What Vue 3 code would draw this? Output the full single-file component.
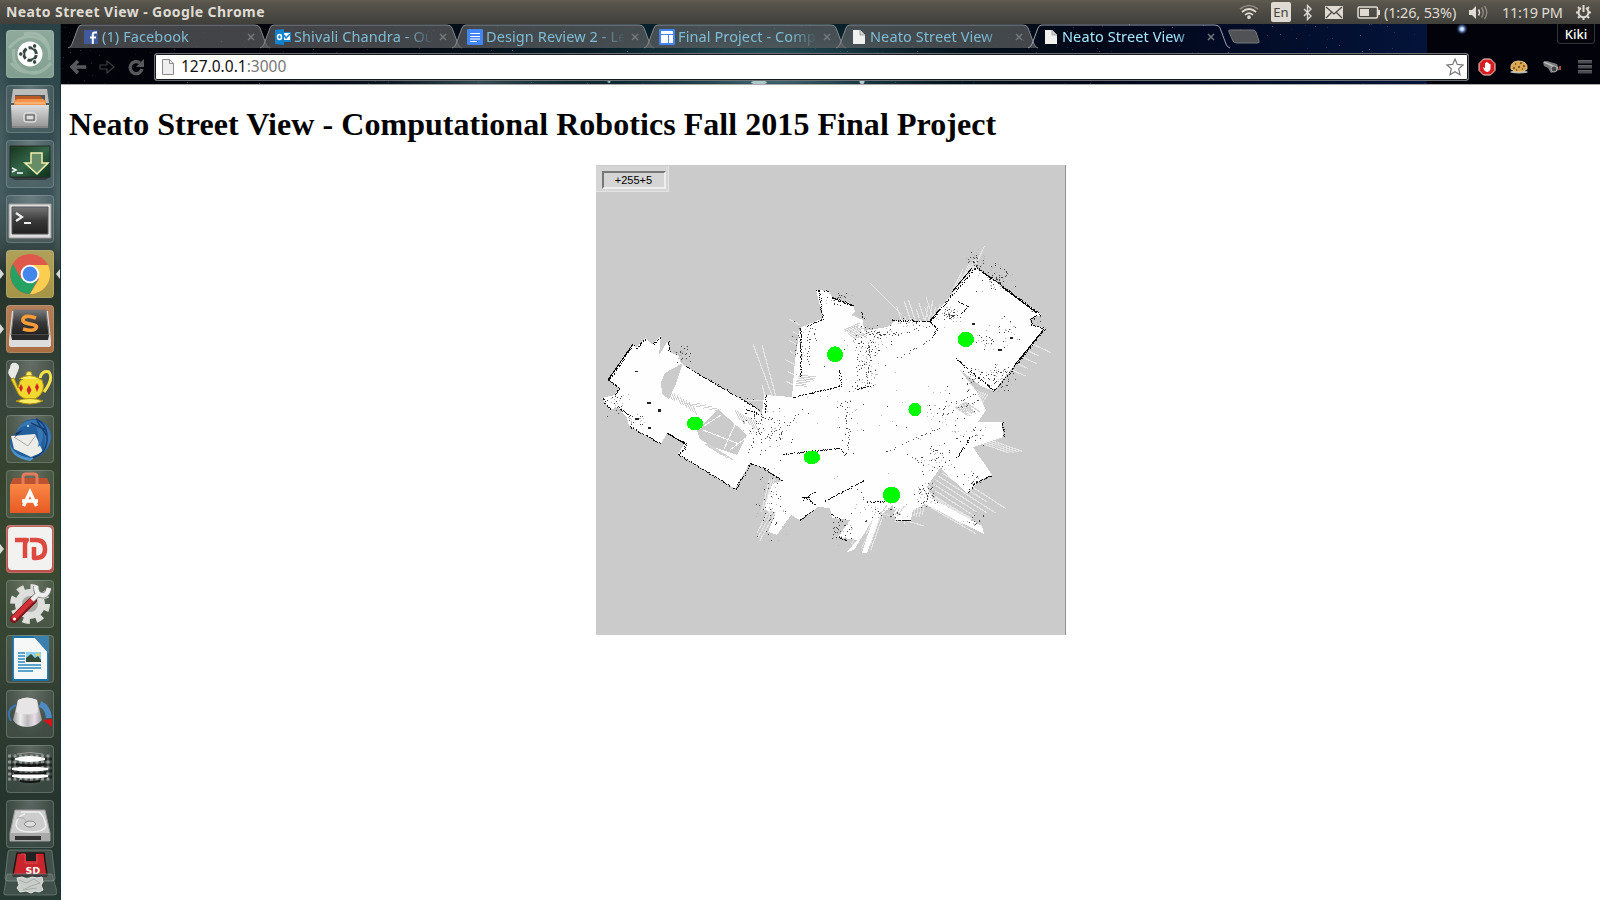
<script setup>
const tabs = [
  { title: '(1) Facebook', icon: 'fb' },
  { title: 'Shivali Chandra - Ou', icon: 'outlook' },
  { title: 'Design Review 2 - Le', icon: 'doc' },
  { title: 'Final Project - Comp', icon: 'site' },
  { title: 'Neato Street View', icon: 'page' },
  { title: 'Neato Street View', icon: 'page', active: true },
]

const apps = [
  { name: 'dash', bg: '#7d9c8c' }, { name: 'files' }, { name: 'download' }, { name: 'terminal' },
  { name: 'chrome', bg: '#a3913f', left: true, right: true }, { name: 'sublime', bg: '#a8693c', left: true },
  { name: 'teapot' }, { name: 'mail' }, { name: 'store' }, { name: 'todo', bg: '#b94a43', left: true },
  { name: 'settings' }, { name: 'writer' }, { name: 'knob' }, { name: 'stripes' }, { name: 'disk' },
]

let seed = 77
const rnd = () => {
  seed = (seed * 16807) % 2147483647
  return seed / 2147483647
}

const stars = Array.from({ length: 420 }, () => ({
  x: Math.floor(rnd() * 1366), y: Math.floor(rnd() * 60), o: rnd() * 0.5 + 0.08, c: rnd() > 0.5 ? '#6fa3b5' : '#3a5f9c',
}))

const rough = (points, amount, step) => {
  let d = ''
  for (let i = 0; i < points.length - 1; i++) {
    const [x1, y1] = points[i]
    const [x2, y2] = points[i + 1]
    const n = Math.max(1, Math.round(Math.hypot(x2 - x1, y2 - y1) / step))
    for (let k = 0; k < n; k++) {
      if (rnd() < 0.12) continue
      const x = Math.round(x1 + ((x2 - x1) * k) / n + (rnd() - 0.5) * amount)
      const y = Math.round(y1 + ((y2 - y1) * k) / n + (rnd() - 0.5) * amount)
      d += `M${x} ${y}h${rnd() > 0.6 ? 2 : 1}v1h-1z`
    }
  }
  return d
}

const firm = [
  [[608, 380], [633, 344]], [[636, 348], [645, 338]], [[652, 345], [661, 336]], [[668, 341], [669, 352]],
  [[608, 380], [619, 388], [615, 395]], [[602, 398], [610, 410]], [[618, 407], [630, 416]],
  [[629, 426], [661, 444]], [[667, 433], [685, 443], [684, 449], [678, 454], [735, 489], [750, 463], [764, 468], [783, 481]],
  [[685, 366], [760, 410]], [[746, 409], [761, 415]], [[800, 328], [800, 377]], [[807, 326], [823, 318]],
  [[818, 290], [822, 318]], [[815, 290], [829, 291]], [[832, 297], [853, 305]], [[832, 298], [853, 306]], [[860, 311], [863, 320]],
  [[792, 397], [840, 386], [839, 369]], [[856, 389], [871, 385]],
  [[929, 322], [942, 306], [975, 267]], [[975, 266], [1041, 315]], [[1036, 315], [1030, 319], [1031, 325], [1044, 328]],
  [[1044, 329], [994, 391]], [[955, 358], [994, 391]], [[892, 320], [930, 321], [936, 329], [930, 338]],
  [[782, 454], [839, 448], [848, 456]], [[824, 501], [864, 480]], [[802, 500], [814, 491]], [[804, 497], [815, 505]],
  [[866, 502], [884, 501]], [[967, 492], [975, 482], [991, 475]], [[956, 457], [970, 437]], [[1002, 422], [1003, 437]],
  [[895, 520], [911, 520]], [[838, 537], [848, 541]], [[831, 514], [842, 521]], [[765, 395], [764, 414]],
  [[958, 301], [967, 306], [961, 314]], [[799, 520], [813, 510]],
].map((p) => rough(p, 0.9, 1.05)).join('')

const heavy = 'M929 322l11-13M667 433l18 11M608 380l25-36M952 292l20-24M982 272l10 7M1002 287l35 26M1044 329l-30 37M802 497l8 1'

const faint = [
  [[886, 451], [940, 427]], [[898, 357], [930, 340]], [[779, 421], [780, 436]], [[846, 407], [848, 452]],
  [[780, 432], [803, 408]], [[808, 328], [808, 366]], [[812, 328], [815, 342]], [[856, 389], [858, 349]],
  [[865, 385], [870, 350]], [[955, 403], [977, 392]], [[940, 416], [980, 398]], [[908, 454], [927, 467]],
  [[858, 490], [866, 501]], [[931, 446], [943, 456]], [[760, 441], [780, 427]], [[764, 450], [757, 454]],
  [[762, 415], [748, 454]], [[865, 332], [895, 334], [930, 326]],
].map((p) => rough(p, 2.4, 2.5)).join('')

const clusters = [
  [872, 340, 30, 18, 120], [867, 366, 11, 26, 60], [995, 277, 22, 16, 110], [975, 262, 13, 13, 45],
  [682, 353, 10, 10, 45], [620, 406, 16, 16, 35], [635, 421, 12, 8, 30], [951, 314, 11, 9, 60], [1000, 377, 17, 17, 80],
  [927, 494, 14, 15, 75], [770, 505, 18, 38, 80], [774, 425, 20, 25, 45], [845, 412, 13, 35, 28], [946, 410, 34, 30, 40],
  [935, 460, 26, 22, 55], [975, 480, 14, 12, 25], [843, 530, 15, 15, 50], [800, 340, 9, 22, 40], [839, 298, 15, 8, 30],
  [1004, 330, 17, 18, 30], [985, 340, 13, 11, 26], [880, 512, 30, 12, 50], [753, 420, 13, 24, 40], [975, 379, 16, 15, 45],
  [971, 435, 20, 15, 30], [910, 321, 28, 6, 40], [1036, 317, 6, 10, 12], [974, 520, 12, 10, 25], [860, 400, 100, 90, 45],
].map(([cx, cy, rx, ry, n]) => {
  let dark = ''
  let pale = ''
  for (let i = 0; i < n; i++) {
    const x = Math.round(cx + (rnd() + rnd() - 1) * rx)
    const y = Math.round(cy + (rnd() + rnd() - 1) * ry)
    if (rnd() > 0.55) dark += `M${x} ${y}h1v1h-1z`
    else pale += `M${x} ${y}h${rnd() > 0.7 ? 2 : 1}v1h-1z`
  }
  return { dark, pale }
})
const darkDots = clusters.map((c) => c.dark).join('')
const paleDots = clusters.map((c) => c.pale).join('')

const fan = (x, y, dx, dy, sx, sy, n, jitter) => {
  let d = ''
  for (let i = 0; i < n; i++) {
    const t = i / (n - 1)
    const a = x + sx * t
    const b = y + sy * t
    const l = 1 - rnd() * jitter
    d += `M${a.toFixed(1)} ${b.toFixed(1)}l${(dx * l).toFixed(1)} ${(dy * l).toFixed(1)}`
  }
  return d
}
const rays =
  fan(920, 492, 62, 40, 26, -22, 8, 0.3) + fan(918, 500, 62, 36, 10, -7, 8, 0.3) + fan(770, 478, -9, 35, 12, 4, 7, 0.4) +
  fan(775, 500, -22, 40, 5, 4, 3, 0.2) + fan(868, 512, -20, 40, 13, -3, 6, 0.4) + fan(878, 516, -13, 36, 5, 0, 3, 0.2) +
  fan(975, 441, 40, 14, 9, -3, 4, 0.3) + fan(902, 322, -8, -24, 32, -1, 8, 0.8) + fan(925, 322, 4, -21, 12, -3, 4, 0.5) +
  fan(800, 325, -15, -8, -3, 62, 7, 0.8) + fan(795, 395, 2, -40, 8, 0, 5, 0.6) + fan(952, 292, 13, -27, 20, -20, 7, 0.5) +
  fan(1012, 370, 20, 9, 20, -26, 5, 0.5) + fan(965, 386, -8, 12, 23, 8, 12, 0.5) + fan(898, 510, -3, 18, 26, -4, 10, 0.6) +
  'M753 344l20 54M762 345l14 52M870 283l32 32M874 511l50 15M746 401l20-1M762 385l4 15'
const greyRays =
  fan(668, 390, 5, 11, 24, 14, 9, 0.5) + fan(684, 404, 10, -2, 31, 7, 6, 0.4) + fan(844, 330, 18, -8, 10, 9, 9, 0.5) +
  fan(795, 385, 18, 2, 4, -10, 7, 0.6) + fan(705, 444, 23, 15, 5, 1, 4, 0.3) +
  fan(735, 410, 7, 14, 18, 10, 8, 0.5) + fan(955, 407, 18, 12, 10, -5, 9, 0.6) + fan(880, 515, 7, -10, 18, 0, 7, 0.7)

const markers = [
  [835, 354.3, 8, 8], [965.8, 339.3, 8.2, 7.7], [915, 409.5, 6.5, 6.5], [695, 423.5, 8.4, 6.7], [811.8, 457.3, 8.3, 6.8], [891.5, 495, 8.7, 8.2],
]
</script>

<template>
  <div class="desktop">
    <header class="panel">
      <span class="window-title">Neato Street View - Google Chrome</span>
      <div class="indicators">
        <svg class="wifi" width="20" height="16" viewBox="0 0 20 16" fill="none" stroke="#dfdbd2" stroke-width="1.7">
          <path d="M1 5Q10-2 19 5" stroke="#8e8b83" /><path d="M3 8Q10 2 17 8M6 11Q10 7 14 11" /><circle cx="10" cy="13.2" r="1" fill="#dfdbd2" />
        </svg>
        <span class="lang">En</span>
        <svg class="bt" width="10" height="17" viewBox="0 0 10 17" fill="none" stroke="#dfdbd2" stroke-width="1.4"><path d="M1 5l7 7-3.5 3.5V1.5L8 5l-7 7" /></svg>
        <svg class="envelope" width="18" height="13" viewBox="0 0 18 13"><path fill="#dfdbd2" d="M0 0h18v13H0z" /><path d="M1 1l8 7 8-7M1 12l6-6M17 12l-6-6" fill="none" stroke="#4b4943" stroke-width="1.3" /></svg>
        <svg class="battery" width="24" height="13" viewBox="0 0 24 13"><rect x="1" y="1" width="19.5" height="11" rx="1.5" fill="none" stroke="#dfdbd2" stroke-width="1.5" /><path fill="#dfdbd2" d="M3 3h9v7H3zM21 4h2v5h-2z" /></svg>
        <span class="charge">(1:26, 53%)</span>
        <svg class="sound" width="20" height="15" viewBox="0 0 20 15"><path fill="#dfdbd2" d="M0 5h3l4-4v13l-4-4H0z" /><path d="M9.500 4.500q2 3 0 6" fill="none" stroke="#dfdbd2" stroke-width="1.5" /><path d="M12.500 2.500q3.500 5 0 10M15.500 1q4.500 6.500 0 13" fill="none" stroke="#8e8b83" stroke-width="1.4" /></svg>
        <span class="clock">11:19 PM</span>
        <svg width="17" height="17" viewBox="0 0 17 17" fill="none" stroke="#dfdbd2"><path d="M6 4a5 5 0 1 0 5 0" stroke-width="2" /><path d="M8.500 1v7M1 8.500h2M14 8.500h2M3 3l1.500 1.500M14 3l-1.500 1.500M3 14l1.500-1.500M14 14l-1.500-1.500M8.500 14v2" stroke-width="2" /></svg>
      </div>
    </header>

    <div class="workspace">
      <nav class="launcher">
        <div v-for="app in apps" :key="app.name" class="tile" :class="[app.name, { colored: app.bg }]" :style="app.bg ? { backgroundColor: app.bg } : null">
          <i v-if="app.left" class="arrow left"></i><i v-if="app.right" class="arrow right"></i>
          <svg width="48" height="48" viewBox="0 0 48 48">
            <g v-if="app.name === 'dash'">
              <path d="M3 18Q17 1 34 9q12 7 9 21M45 33Q32 49 17 40 5 33 8 19M18 4q19-4 25 14M5 33q9 12 26 9" fill="none" stroke="#bed1c6" stroke-width="3" opacity=".4" />
              <circle cx="24" cy="24" r="12.500" fill="#fff" /><circle cx="24" cy="24" r="6.300" fill="none" stroke="#364740" stroke-width="3" stroke-dasharray="11.200 2" stroke-dashoffset="-1" />
              <g fill="#364740" stroke="#fff"><circle cx="14.800" cy="24" r="2.300" /><circle cx="28.600" cy="16" r="2.300" /><circle cx="28.600" cy="32" r="2.300" /></g>
            </g>
            <g v-else-if="app.name === 'files'">
              <path d="M7 4h34l2 14H5z" fill="#bcbcbb" /><path d="M9 10h30v10H9z" fill="#555" /><path d="M9 11h25l3 3v7H9z" fill="#b75a26" /><path d="M11 14h26l3 2v7H8v-7z" fill="#f39348" /><path d="M9 18h30" stroke="#fbd0a2" />
              <path d="M5 20h38l-1 23H6z" fill="url(#silver)" /><path d="M6 42h36" stroke="#777" /><rect x="18" y="28" width="12" height="9" rx="2" fill="#aaa" stroke="#eee" /><rect x="20" y="30" width="8" height="5" fill="#ddd" stroke="#555" />
            </g>
            <g v-else-if="app.name === 'download'">
              <path d="M4 6h40v31H4z" fill="url(#green)" stroke="#242f29" /><path d="M4 37h40l-5 3H9z" fill="#222" opacity=".6" /><path d="M6 28l4 2-4 2M11 33h6" fill="none" stroke="#fff" stroke-width="1.500" /><path d="M25 13h11v10h6L31 34 19 23h6z" fill="#668d66" stroke="#f4f0af" stroke-width="1.500" />
            </g>
            <g v-else-if="app.name === 'terminal'">
              <path d="M3 9h42v34H3z" fill="#ddd" stroke="#999" /><path d="M6 12h36v27H6z" fill="url(#dark)" stroke="#555" /><path d="M10 18l6 4-6 4M18 28h7" fill="none" stroke="#eee" stroke-width="2.200" />
            </g>
            <g v-else-if="app.name === 'chrome'">
              <circle cx="24" cy="24" r="20" fill="#de594c" /><path d="M15 29L7 14A20 20 0 0 0 24 44l8-15z" fill="#25a261" /><path d="M24 15h18A20 20 0 0 1 24 44l9-15z" fill="#fbce52" /><circle cx="24" cy="24" r="9.300" fill="#fff" /><circle cx="24" cy="24" r="7.400" fill="#4387ed" />
            </g>
            <g v-else-if="app.name === 'sublime'">
              <path d="M6 6h36l3 29v5q0 2-3 2H6q-3 0-3-2v-5z" fill="#ddd" /><path d="M8 5h32l3 25H5z" fill="url(#dark)" stroke="#777" /><path d="M5 30h38l-1 5H6z" fill="#292929" /><path d="M30 13q-11-4-13 1-1 4 7 5t6 4q-2 4-13 1" fill="none" stroke="#f99b38" stroke-width="3.600" />
            </g>
            <g v-else-if="app.name === 'teapot'">
              <path d="M5 18Q0 12 4 8q0-6 6-5 5 2 2 8-3 6-3 8" fill="#e9eae5" /><path d="M34 18q2-8 9-6 5 7-5 20" fill="none" stroke="#f4e348" stroke-width="3" /><path d="M5 19l6 12q2 6 9 8h9q12-7 7-19-13-7-22 1l-2 7-4-10z" fill="#f2d92e" stroke="#b59312" /><circle cx="23" cy="14.500" r="3" fill="#fbed75" stroke="#b59312" /><path d="M13 19q10-7 21 0M10 41q14-5 27 0-13 6-27 0z" fill="#f9ea60" stroke="#b59312" /><path d="M15 24l2 4-2 4-2-4zM23 25l2.500 5-2.500 5-2.500-5zM31 23l2 4-2 5-2-5z" fill="#d32629" />
            </g>
            <g v-else-if="app.name === 'mail'">
              <path d="M12 15Q17 3 29 4q15 2 16 18-1 18-20 22Q4 43 4 25z" fill="#225f9c" /><path d="M5 21l24-2 8 18-12 5-17-8z" fill="#ecece8" /><path d="M8 22l14 9 8-11" fill="none" stroke="#aaa" /><path d="M10 18q7-11 20-7 4 13 2 21 6-4 5-16 5 12-2 23 13-10 9-23Q38 4 26 5q-12 1-16 13z" fill="#3775b5" /><path d="M4 28q2 12 20 15l6-1-6 4Q4 43 4 28z" fill="#4d95cd" /><path d="M30 4q12 5 11 22-1 12-14 17M25 8l15 7M31 6l10 15" fill="none" stroke="#153f73" stroke-width="1.500" /><path d="M10 18l7-3-8 7z" fill="#173253" /><circle cx="22" cy="11" r="1" fill="#fff" />
            </g>
            <g v-else-if="app.name === 'store'">
              <path d="M7 8h34l3 7H4z" fill="#bd5231" /><path d="M17 14V7q0-3 3-3h8q3 0 3 3v7" fill="none" stroke="#e47b5a" stroke-width="3" /><path d="M4 14h40v29H4z" fill="url(#orange)" /><path d="M17.500 36l6.500-14 6.500 14M16 31h16" fill="none" stroke="#fff" stroke-width="3.400" />
            </g>
            <g v-else-if="app.name === 'todo'"><rect x="2" y="2" width="44" height="43" rx="4" fill="#f2f2f1" /><path d="M9 15h12q-2 1-2 5v13M24 15h6q9 0 9 9t-9 9h-2V22" fill="none" stroke="#de493f" stroke-width="4.500" stroke-linejoin="round" /></g>
            <g v-else-if="app.name === 'settings'">
              <circle cx="24" cy="24" r="17" fill="none" stroke="#dededb" stroke-width="6" stroke-dasharray="7 6.350" /><circle cx="24" cy="24" r="15" fill="#dedfdc" /><circle cx="24" cy="24" r="8" fill="#a7aaa2" /><path d="M8 39L27 20" stroke="#7b171b" stroke-width="8" stroke-linecap="round" /><path d="M8 38L27 19" stroke="#d33338" stroke-width="5" stroke-linecap="round" /><path d="M26 20l7-7M30 6q0 8 5 9 6 2 8-7" fill="none" stroke="#777" stroke-width="6" /><path d="M26 20l7-7M30 6q0 8 5 9 6 2 8-7" fill="none" stroke="#eee" stroke-width="4.500" /><circle cx="8.500" cy="39" r="1.500" fill="#fff" />
            </g>
            <g v-else-if="app.name === 'writer'">
              <path d="M7 2h24l11 14v29H7z" fill="#f6f7f7" stroke="#1971a5" stroke-width="1.800" /><path d="M27 1h16v18z" fill="#3b80ad" /><path d="M12 18h7m-7 3h7m-7 3h7m-7 3h7m-7 3h23m-23 3h23m-23 3h15" stroke="#2788bf" stroke-width="1.300" /><path d="M20 17h15v10H20z" fill="#8ed0f1" /><path d="M20 27v-4l5-4 4 4 3-2 3 4v2z" fill="#334b35" /><circle cx="32" cy="19.500" r="1.500" fill="#ffd02c" />
            </g>
            <g v-else-if="app.name === 'knob'">
              <path d="M5 31Q-1 20 10 15" fill="none" stroke="#3975b6" stroke-width="2" /><path d="M34 14q8 3 9 14" fill="none" stroke="#4e8ac3" stroke-width="6" /><path d="M37 30l9-1v8z" fill="#db1118" /><path d="M12 10q9-4 19 0l5 20q-6 7-15 7-10 0-14-7z" fill="url(#knobside)" /><path d="M12 10q9-5 19 0l1 12q-10 5-22 0z" fill="#e8e5e6" />
            </g>
            <g v-else-if="app.name === 'stripes'">
              <path d="M2 11h44M2 17h44M2 23h44M2 29h44M2 34h44" stroke="#929595" stroke-width="3" stroke-dasharray="3 2.500" /><path d="M2 14h44M2 20h44M2 26h44M2 32h44" stroke="#242625" stroke-width="3" stroke-dasharray="3 2.500" stroke-dashoffset="2.700" />
              <path d="M9 13q15-4 30 0v2q-15 4-30 0zM6 23q18-3 36 0v2q-18 3-36 0zM6 30q18-3 36 0v2q-18 3-36 0z" fill="#fff" /><path d="M10 18q14 3 29 0v2q-15 4-29 0zM8 27q16 2 32 0v2q-16 1-32 0zM14 35q10 2 20 0v2q-10 2-20 0z" fill="#141414" /><path d="M11 9q13-3 26 0" fill="none" stroke="#999" />
            </g>
            <g v-else>
              <path d="M9 10h30l5 23v8H4v-8z" fill="#cbcccb" stroke="#999" /><path d="M4 33h40v8H4z" fill="#a8a9a8" /><path d="M9 36h26v4H9z" fill="#333" /><path d="M15 12h18q5 3 7 14-2 6-15 6-14 0-15-7 1-9 9-11" fill="none" stroke="#eee" stroke-width="1.500" /><ellipse cx="24" cy="24" rx="5.500" ry="3" fill="#ddd" stroke="#888" /><path d="M11 18q8-2 10 5" fill="none" stroke="#aaa" />
            </g>
          </svg>
        </div>
        <svg class="folded" width="54" height="48" viewBox="0 0 54 48">
          <path d="M7 1h40q2 0 2 2l3 26q0 3-3 3H5q-3 0-3-3L5 3q0-2 2-2z" fill="#fff" fill-opacity=".13" stroke="#889991" stroke-opacity=".55" />
          <path d="M14 4h27l3 22H10z" fill="#c8252c" stroke="#251617" stroke-width="1.500" /><path d="M23 4h10v8H23z" fill="#222" /><path d="M18 5h4v9h12V5" fill="none" stroke="#e45b5e" stroke-width=".7" />
          <path d="M10 25h34v3H10z" fill="#222" /><text x="22.500" y="24.500" class="sd">SD</text>
          <path d="M4 25h45l5 18q0 3-3 3H3q-3 0-2-3z" fill="#fff" fill-opacity=".12" stroke="#889991" stroke-opacity=".5" />
          <path d="M14 29l5-1 5 2 5-2 5 1 5-1 1 5-2 3 2 5-4 2-4-1-4 2-5-2-6 1-3-4 2-3z" fill="#c9cdca" stroke="#dfe2e0" /><path d="M16 31l7 3 8-4 6 4-9 3-8 4 14-2" fill="none" stroke="#a5aca7" />
        </svg>
      </nav>

      <main class="browser">
        <section class="browser-top">
          <svg class="sky" width="1539" height="60" viewBox="0 0 1539 60">
            <rect width="1366" height="60" fill="url(#sky)" /><ellipse cx="710" cy="46" rx="210" ry="46" fill="url(#nebula)" /><ellipse cx="420" cy="58" rx="210" ry="30" fill="url(#nebula)" opacity=".42" />
            <rect v-for="(s, i) in stars" :key="i" :x="s.x" :y="s.y" width="1" height="1" :fill="s.c" :opacity="s.o" />
            <rect x="1366" width="173" height="60" fill="#02030a" /><circle cx="1401" cy="5" r="6" fill="url(#glow)" />
            <circle cx="548" cy="57.500" r="1.500" fill="#cceced" opacity=".7" /><ellipse cx="698" cy="58.500" rx="8" ry="2" fill="#e4f5f4" opacity=".7" /><circle cx="801" cy="57.500" r="2.500" fill="#e2f4f6" opacity=".8" />
          </svg>
          <div class="strip">
            <div v-for="(tab, i) in tabs" :key="i" class="tab" :class="{ active: tab.active }">
              <svg class="outline" width="202" height="25" viewBox="0 0 202 25">
                <path d="M0 24q3-1 4-4L10 4q1-3 4-3h173q4 0 5 3l6 16q1 3 4 4z" :fill="tab.active ? 'none' : '#606162'" fill-opacity=".7" />
                <path d="M0 24q3-1 4-4L10 4q1-3 4-3h173q4 0 5 3l6 16q1 3 4 4" fill="none" :stroke="tab.active ? '#9ca2aa' : '#85898c'" />
              </svg>
              <svg class="favicon" width="16" height="16" viewBox="0 0 16 16">
                <g v-if="tab.icon === 'fb'"><path fill="#405a9d" d="M1 1h14v14H1z" /><path d="M9.800 15V5.500q0-2 2-2H14M7 8.500h6" fill="none" stroke="#fff" stroke-width="2" /></g>
                <g v-else-if="tab.icon === 'outlook'"><path fill="#1382cd" d="M0 1l9-1v16l-9-1z" /><ellipse cx="4.500" cy="8" rx="2" ry="2.500" fill="none" stroke="#fff" stroke-width="1.500" /><path d="M9 3h7v10H9z" fill="#1382cd" /><path d="M9 4h6v7H9z" fill="#fff" /><path d="M9 6l2 3 4-4" fill="none" stroke="#1382cd" stroke-width="1.500" /></g>
                <g v-else-if="tab.icon === 'doc'"><rect width="16" height="16" rx="1" fill="#4286f5" /><path d="M3 4.500h10M3 7.500h10M3 10h10M3 12.500h7" stroke="#fff" stroke-width="1.200" /></g>
                <g v-else-if="tab.icon === 'site'"><rect width="16" height="16" rx="1" fill="#4286f5" /><path d="M2 2h12v3H2zM2 6h7v8H2zM10 6h4v8h-4z" fill="#fff" /></g>
                <g v-else><path d="M2 1h7l5 5v9H2z" fill="#f0f0f0" /><path d="M9 1v5h5" fill="#d5d5d5" stroke="#888" stroke-width=".7" /></g>
              </svg>
              <span class="tab-title">{{ tab.title }}</span>
              <svg class="close" width="8" height="8" viewBox="0 0 8 8"><path d="M1 1l6 6M7 1L1 7" stroke="#75787a" stroke-width="1.500" /></svg>
            </div>
            <svg class="new-tab" width="32" height="16" viewBox="0 0 32 16"><path d="M2 1h23q2 0 3 2l3 9q1 2-2 2H9q-3 0-4-2L1 3q-1-2 1-2z" fill="#515255" stroke="#74777d" /></svg>
            <span class="user">Kiki</span>
          </div>
          <div class="toolbar">
            <svg class="nav-icons" width="76" height="20" viewBox="0 0 76 20">
              <g fill="none"><path d="M17 10H4M9 4l-6 6 6 6" stroke="#58595b" stroke-width="3.500" /><path d="M31 8h7V4l7 6-7 6v-4h-7z" stroke="#3c3d41" stroke-width="1.200" /><path d="M73 12a6 6 0 1 1-2-6" stroke="#58595b" stroke-width="3.300" /></g><path d="M75 2v8h-8z" fill="#58595b" />
            </svg>
            <div class="omnibox">
              <svg width="12" height="16" viewBox="0 0 12 16"><path d="M.5.5h7l4 4v11H.5zM7.500.5v4h4" fill="#eee" stroke="#8b8b8b" /></svg>
              <span class="url">127.0.0.1<i>:3000</i></span>
              <svg class="bookmark" width="18" height="18" viewBox="0 0 18 18"><path d="M9 1l2.300 5.400 5.700.6-4.300 3.900 1.300 5.800L9 13.700l-5 3 1.300-5.800L1 7l5.700-.6z" fill="#fff" stroke="#777" stroke-width="1.200" /></svg>
            </div>
            <svg class="ext" width="18" height="18" viewBox="0 0 18 18"><path d="M5.500 1h7L17 5.500v7L12.500 17h-7L1 12.500v-7z" fill="#d91c1d" stroke="#f3dddd" /><path d="M5 9l2 1V5h1v3-4h1.500v4-3H11v4-3h1.500v5q-1 3-3 3T6 12z" fill="#fff" /></svg>
            <svg class="ext" width="20" height="18" viewBox="0 0 20 18"><ellipse cx="10" cy="14" rx="9" ry="1.500" fill="#bbb" /><path d="M2 11Q1 4 9 3q10 0 9 8-8 6-16 0z" fill="#d9a750" stroke="#e6c383" /><path d="M6 6h1M11 5h2M4 10h2M9 9h2M14 8h2M13 11h1M7 12h1" stroke="#68411c" stroke-width="1.300" /></svg>
            <svg class="ext" width="20" height="18" viewBox="0 0 20 18"><path d="M1 4l4-1 10 3 2 6-8 3-3-5-4-2z" fill="#77797b" /><path d="M2 4l9 4M8 7l8 3" stroke="#bbb" stroke-width="1.600" /><circle cx="12" cy="11" r="3" fill="#444" stroke="#aaa" /><path d="M17 8h2v4h-2z" fill="#aa4844" /></svg>
            <svg class="menu" width="16" height="17" viewBox="0 0 16 17"><path d="M1 3h14M1 8h14M1 13h14" stroke="#4b4c4f" stroke-width="3" /><path d="M1 1.500h14M1 6.500h14M1 11.500h14" stroke="#717275" stroke-width=".8" /></svg>
          </div>
        </section>

        <article class="page">
          <h1>Neato Street View - Computational Robotics Fall 2015 Final Project</h1>
          <div class="map">
            <svg width="470" height="470" viewBox="596 165 470 470" shape-rendering="crispEdges">
              <path d="M596 165h470v470H596z" fill="#cbcbcb" />
              <path :d="rays" fill="none" stroke="#e5e5e5" stroke-width="1.200" />
              <path class="floor" d="M608 380L633 344 636 348 645 338 652 345 661 335 659 355 668 341 670 352 679 356 680 362 685 366 753 406 762 414 764 395 792 397 795 360 800 328 823 318 816 290 829 291 832 297 853 305 855 312 851 315 863 320 864 331 887 327 897 320 930 321 940 308 975 267 1042 315 1030 318 1031 325 1044 328 994 391 981 386 960 370 977 392 986 410 978 422 1002 422 1003 437 973 447 992 475 980 480 967 493 940 468 927 487 933 499 982 526 984 534 925 504 913 510 911 520 895 520 893 505 880 516 867 553 862 553 873 519 854 550 847 552 857 540 838 537 850 520 832 518 830 508 818 507 800 520 791 515 777 535 768 532 776 512 764 510 772 484 783 481 764 468 750 463 735 489 678 454 685 443 667 433 661 444 629 426 627 418 618 407 610 410 602 398 615 395 619 388z" />
              <path d="M661 382L665 373 683 363 675 386 669 399 662 394zM697 431L718 409 747 435 737 455 713 447 700 439z" fill="#cbcbcb" />
              <path d="M703 430l36 14M737 420l-13 29M730 450l17-13M704 426l17-11" stroke="#fff" fill="none" />
              <path :d="greyRays" fill="none" stroke="#d0d0d0" />
              <path :d="paleDots" fill="#b9b9b9" /><path :d="darkDots" fill="#444" /><path :d="faint" fill="#555" /><path :d="firm" fill="#111" /><path :d="heavy" fill="none" stroke="#090909" />
              <path d="M635 371h3v1h-3zM647 402h4v2h-4zM658 409h3v3h-3zM635 418h4v2h-4zM648 427h3v2h-3zM998 349h4v2h-4zM1010 337h3v2h-3zM972 323h3v2h-3z" fill="#222" />
              <ellipse v-for="(m, i) in markers" :key="i" :cx="m[0]" :cy="m[1]" :rx="m[2]" :ry="m[3]" fill="#00fa00" />
              <path d="M1065.500 165v470" fill="none" stroke="#929292" />
            </svg>
            <div class="readout"><span>+255+5</span></div>
          </div>
        </article>
      </main>
    </div>

    <svg class="defs" width="0" height="0">
      <defs>
        <linearGradient id="silver" x2="0" y2="1"><stop stop-color="#dedede" /><stop offset="1" stop-color="#929292" /></linearGradient>
        <linearGradient id="knobside"><stop stop-color="#999" /><stop offset=".25" stop-color="#eee" /><stop offset=".5" stop-color="#bbb" /><stop offset=".75" stop-color="#eadde8" /><stop offset="1" stop-color="#999" /></linearGradient>
        <linearGradient id="green" x2="1" y2="1"><stop stop-color="#16351f" /><stop offset=".5" stop-color="#346548" /><stop offset="1" stop-color="#0a3018" /></linearGradient>
        <linearGradient id="dark" x2="0" y2="1"><stop stop-color="#777" /><stop offset=".5" stop-color="#393939" /><stop offset="1" stop-color="#202020" /></linearGradient>
        <linearGradient id="orange" x2="0" y2="1"><stop stop-color="#f98744" /><stop offset="1" stop-color="#e85a24" /></linearGradient>
        <linearGradient id="sky"><stop stop-color="#020209" /><stop offset=".22" stop-color="#02040d" /><stop offset=".36" stop-color="#061923" /><stop offset=".52" stop-color="#0a2933" /><stop offset=".66" stop-color="#03111b" /><stop offset=".76" stop-color="#020718" /><stop offset="1" stop-color="#03133a" /></linearGradient>
        <radialGradient id="nebula"><stop stop-color="#8fb6ba" stop-opacity=".85" /><stop offset=".4" stop-color="#3d6973" stop-opacity=".5" /><stop offset="1" stop-color="#12313c" stop-opacity="0" /></radialGradient>
        <radialGradient id="glow"><stop stop-color="#fff" /><stop offset=".3" stop-color="#a6c7ff" /><stop offset="1" stop-color="#0a205c" stop-opacity="0" /></radialGradient>
      </defs>
    </svg>
  </div>
</template>

<style>
body { margin: 0; overflow: hidden; }
</style>
<style scoped>
.desktop { width: 1600px; height: 900px; overflow: hidden; display: flex; flex-direction: column; font-family: "Noto Sans", sans-serif; background: #fff; }
.desktop * { box-sizing: border-box; }
svg { display: block; flex: none; }
.panel { height: 24px; flex: none; display: flex; align-items: center; justify-content: space-between; padding: 0 8px 0 6px; background: linear-gradient(#605c4f, #57544c 15%, #403f3a); color: #dfdbd2; }
.window-title { font-size: 14px; font-weight: 700; line-height: 24px; letter-spacing: .41px; white-space: pre; }
.indicators { display: flex; align-items: center; height: 24px; font-size: 14.500px; white-space: nowrap; }
.lang { width: 20px; height: 20px; margin-left: 12px; border-radius: 2px; background: #dfdbd2; color: #45433d; font-size: 13px; line-height: 20px; text-align: center; }
.bt { margin-left: 12px; }
.envelope { margin-left: 12px; }
.battery { margin-left: 14px; }
.charge { width: 81px; margin-left: 3px; letter-spacing: -.15px; }
.sound { margin-left: 4px; }
.clock { width: 61px; margin: 0 12px 0 13px; letter-spacing: -.25px; }
.workspace { display: flex; flex: 1; min-height: 0; }
.launcher { width: 61px; flex: none; display: flex; flex-direction: column; gap: 7px; padding: 6px 0 0 6px; overflow: hidden; border-right: 1px solid #18323c; background: radial-gradient(ellipse at 0 13%, #71818055, transparent 12%), radial-gradient(ellipse at 100% 19%, #8998944a, transparent 10%), linear-gradient(#294246, #3b5358 20%, #38494a 25%, #26332a 29%, #374439 43%, #35432e 52%, #394932 63%, #334033 75%, #26352e 87%, #263832); }
.tile { position: relative; width: 48px; height: 48px; flex: none; border-radius: 4px; background: radial-gradient(ellipse at 50% 0, #ffffff40, #ffffff18 70%); box-shadow: inset 0 0 0 1px #b6cbc545; }
.tile.colored { background-image: linear-gradient(#ffffff24, #ffffff08); }
.arrow { position: absolute; top: 19px; border: 5px solid transparent; }
.arrow.left { left: -6px; border-left: 4px solid #d9dad5; border-right: 0; }
.arrow.right { right: -6px; border-right: 4px solid #d9dad5; border-left: 0; }
.folded { margin: -6px 0 0 -3px; }
.sd { font: bold 9.500px "DejaVu Sans", sans-serif; fill: #fff; }
.browser { width: 1539px; flex: none; display: flex; flex-direction: column; }
.browser-top { position: relative; height: 61px; flex: none; background: #02030a; border-bottom: 1px solid #aaa; }
.sky { position: absolute; left: 0; top: 0; }
.strip { position: relative; display: flex; height: 27px; padding-left: 7px; }
.tab { position: relative; width: 192px; flex: none; display: flex; align-items: center; height: 25px; padding-left: 15px; color: #7ebcd5; }
.outline { position: absolute; left: 0; top: 0; }
.favicon { position: relative; }
.tab-title { position: relative; width: 142px; margin-left: 3px; white-space: nowrap; font-size: 14.500px; letter-spacing: .1px; line-height: 22px; padding-bottom: 2px; -webkit-mask-image: linear-gradient(90deg, #000 112px, transparent 139px); mask-image: linear-gradient(90deg, #000 112px, transparent 139px); }
.close { position: relative; margin-left: 3px; }
.active { color: #a5e7fc; }
.new-tab { margin: 5px 0 0 8px; }
.user { width: 38px; height: 20px; margin-left: auto; margin-right: 5px; border: 1px solid #303139; border-top: 0; border-radius: 0 0 4px 4px; background: #04050a; color: #fff; font-size: 13px; font-weight: 500; line-height: 21px; text-align: center; }
.toolbar { position: relative; display: flex; align-items: center; height: 32px; padding: 0 7px 0 8px; }
.nav-icons { margin-right: 9px; }
.omnibox { width: 1315px; height: 28px; flex: none; display: flex; align-items: center; padding: 0 4px 0 7px; border: 1px solid #6d7075; border-radius: 3px; background: #fff; box-shadow: inset 0 0 0 1px #15181d; }
.url { margin-left: 7px; font-size: 15.500px; line-height: 24px; padding-bottom: 2px; color: #111; }
.url i { font-style: normal; color: #777; }
.bookmark { margin-left: auto; }
.ext { margin-left: 9px; margin-right: 4px; }
.menu { margin-left: auto; }
.page { flex: 1; padding: 0 8px; overflow: hidden; background: #fff; }
h1 { margin: 21px 0 20px; font: bold 32px/37px "Liberation Serif", serif; letter-spacing: .047px; color: #000; white-space: nowrap; height: 39px; }
.map { position: relative; width: 470px; height: 470px; margin: 0 auto; }
.floor { fill: #fefefe; }
.readout { position: absolute; left: 0; top: 1px; width: 73px; height: 26px; padding: 5px 3px 3px 6px; background: #d5d5d5; border-right: 1px solid #e4e4e4; border-bottom: 1px solid #e4e4e4; }
.readout span { display: block; width: 64px; height: 18px; border: 2px solid; border-color: #777 #eee #eee #777; font: 11px/14px "Liberation Sans", sans-serif; text-align: center; color: #000; }
.defs { position: absolute; }
</style>
